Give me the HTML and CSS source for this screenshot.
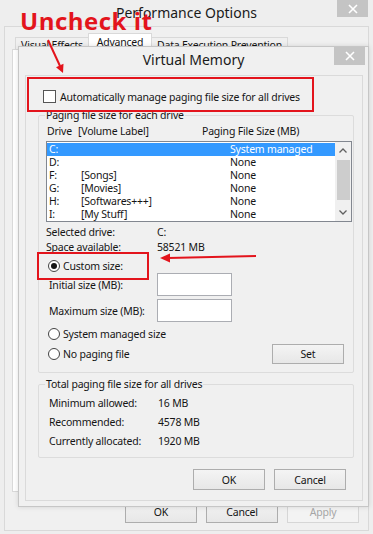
FILE: index.html
```html
<!DOCTYPE html>
<html lang="en">
<head>
  <meta charset="UTF-8">
  <title>Virtual Memory</title>
  <link rel="stylesheet" href="styles.css">
</head>
<body>

  <!-- Performance Options window (behind) -->
  <div class="perf">
    <div class="win-title">
      <span class="win-caption">Performance Options</span>
      <span class="close-btn perf-close">
        <svg width="10" height="10" viewBox="0 0 10 10"><path d="M1 1L9 9M9 1L1 9" stroke="#fff" stroke-width="1.6"/></svg>
      </span>
    </div>
    <div class="perf-client">
      <div class="tabs">
        <span class="tab tab-visual">Visual Effects</span>
        <span class="tab tab-adv active">Advanced</span>
        <span class="tab tab-dep">Data Execution Prevention</span>
      </div>
      <div class="tab-page"></div>
      <div class="btn-row perf-btns">
        <button class="btn">OK</button>
        <button class="btn">Cancel</button>
        <button class="btn" disabled>Apply</button>
      </div>
    </div>
  </div>

  <!-- Virtual Memory dialog -->
  <div class="vm">
    <div class="win-title vm-title">
      <span class="win-caption">Virtual Memory</span>
      <span class="close-btn vm-close">
        <svg width="10" height="10" viewBox="0 0 10 10"><path d="M1 1L9 9M9 1L1 9" stroke="#fff" stroke-width="1.6"/></svg>
      </span>
    </div>
    <div class="vm-client">
      <label class="check-row"><span class="checkbox"></span>Automatically manage paging file size for all drives</label>

      <fieldset class="group group-drives">
        <legend>Paging file size for each drive</legend>
        <div class="list-head"><span>Drive</span><span>[Volume Label]</span><span>Paging File Size (MB)</span></div>
        <div class="listbox">
          <div class="list-rows">
            <div class="list-row selected"><span>C:</span><span></span><span>System managed</span></div>
            <div class="list-row"><span>D:</span><span></span><span>None</span></div>
            <div class="list-row"><span>F:</span><span>[Songs]</span><span>None</span></div>
            <div class="list-row"><span>G:</span><span>[Movies]</span><span>None</span></div>
            <div class="list-row"><span>H:</span><span>[Softwares+++]</span><span>None</span></div>
            <div class="list-row"><span>I:</span><span>[My Stuff]</span><span>None</span></div>
          </div>
          <div class="scrollbar">
            <span class="sb-btn"><svg width="8" height="5" viewBox="0 0 8 5"><path d="M0.5 4.5L4 1L7.5 4.5" fill="none" stroke="#606060" stroke-width="1.3"/></svg></span>
            <span class="sb-thumb"></span>
            <span class="sb-space"></span>
            <span class="sb-btn"><svg width="8" height="5" viewBox="0 0 8 5"><path d="M0.5 0.5L4 4L7.5 0.5" fill="none" stroke="#606060" stroke-width="1.3"/></svg></span>
          </div>
        </div>

        <div class="info-grid">
          <span>Selected drive:</span><span>C:</span>
          <span>Space available:</span><span>58521 MB</span>
        </div>

        <label class="radio-row custom-row"><span class="radio checked"></span>Custom size:</label>
        <div class="size-row"><span class="size-label">Initial size (MB):</span><span class="textbox"></span></div>
        <div class="size-row size-max"><span class="size-label">Maximum size (MB):</span><span class="textbox"></span></div>
        <label class="radio-row system-row"><span class="radio"></span>System managed size</label>
        <div class="set-row">
          <label class="radio-row"><span class="radio"></span>No paging file</label>
          <button class="btn btn-set">Set</button>
        </div>
      </fieldset>

      <fieldset class="group group-total">
        <legend>Total paging file size for all drives</legend>
        <div class="total-grid">
          <span>Minimum allowed:</span><span>16 MB</span>
          <span>Recommended:</span><span>4578 MB</span>
          <span>Currently allocated:</span><span>1920 MB</span>
        </div>
      </fieldset>

      <div class="btn-row vm-btns">
        <button class="btn">OK</button>
        <button class="btn">Cancel</button>
      </div>
    </div>
  </div>

  <!-- red annotations -->
  <div class="note-title">Uncheck it</div>
  <div class="note-box note-auto"></div>
  <div class="note-box note-custom"></div>
  <svg class="note-arrows" width="373" height="534" viewBox="0 0 373 534">
    <line x1="48" y1="40" x2="60" y2="66" stroke="#e3141c" stroke-width="2"/>
    <polygon points="63,73 63.5,63.8 56,67.2" fill="#e3141c"/>
    <line x1="256" y1="256" x2="168" y2="258" stroke="#e3141c" stroke-width="2"/>
    <polygon points="160,258 170,253.5 170,262.5" fill="#e3141c"/>
  </svg>

</body>
</html>
```

FILE: styles.css
```css
body {
  margin: 0;
  width: 373px;
  height: 534px;
  position: relative;
  overflow: hidden;
  background: #eeeeee;
  font-family: "Noto Sans", sans-serif;
  font-size: 10.5px;
  letter-spacing: -0.2px;
  color: #151515;
}

/* shared window bits */
.win-title {
  display: grid;
  grid-template-columns: 1fr auto 1fr;
  align-items: start;
}

.win-caption {
  grid-column: 2;
  font-size: 14px;
  line-height: 26px;
  letter-spacing: 0;
  color: #1a1a1a;
}

.close-btn {
  grid-column: 3;
  justify-self: end;
  display: flex;
  align-items: center;
  justify-content: center;
  width: 31px;
  height: 18px;
  background: #c4c4c4;
}

.btn-row {
  display: flex;
  justify-content: flex-end;
  gap: 9px;
}

.btn {
  width: 72px;
  height: 23px;
  padding: 0;
  border: 1px solid #adadad;
  background: linear-gradient(#f4f4f4, #e7e7e7);
  font: inherit;
  letter-spacing: inherit;
  color: #151515;
}

.btn:disabled {
  color: #a6a6a6;
  border-color: #d6d6d6;
  background: #f3f3f3;
}

/* Performance Options */
.perf {
  height: 534px;
  display: flex;
  flex-direction: column;
}

.perf-close {
  margin-right: 5px;
  height: 17px;
}

.perf-client {
  flex: 1;
  display: flex;
  flex-direction: column;
  margin: 0 4px 3px 4px;
  padding: 6px 8px 7px 7px;
  border: 1px solid #d9d9d9;
  background: #f0f0f0;
}

.tabs {
  display: flex;
  align-items: flex-end;
  height: 16px;
  padding-left: 3px;
}

.tab {
  height: 12px;
  box-sizing: border-box;
  border: 1px solid #d9d9d9;
  border-bottom: none;
  margin-right: -1px;
  text-align: center;
  line-height: 15px;
  white-space: nowrap;
  overflow: hidden;
}

.tab.active {
  height: 16px;
  line-height: 17px;
  background: #fff;
}

.tab-visual { width: 74px; }
.tab-adv { width: 64px; }
.tab-dep { width: 137px; }

.tab-page {
  flex: 1;
  background: #fff;
  border: 1px solid #d9d9d9;
}

.perf-btns {
  margin-top: 8px;
  margin-right: 1px;
}

/* Virtual Memory dialog */
.vm {
  position: absolute;
  left: 18px;
  top: 46px;
  width: 351px;
  height: 461px;
  box-sizing: border-box;
  display: flex;
  flex-direction: column;
  border: 1px solid #c6c6c6;
  background: #f0f0f0;
  box-shadow: 0 0 5px rgba(0,0,0,0.12);
}

.vm-title {
  height: 28px;
}

.vm-close {
  margin-right: 3px;
}

.vm-client {
  flex: 1;
  display: flex;
  flex-direction: column;
  margin: 0 5px 5px 6px;
  padding: 0 8px 0 12px;
  border: 1px solid #dadada;
}

.check-row {
  display: flex;
  align-items: center;
  gap: 4px;
  height: 13px;
  margin-top: 14px;
  padding-left: 5px;
}

.checkbox {
  width: 13px;
  height: 13px;
  box-sizing: border-box;
  border: 1px solid #555;
  background: #fff;
}

.group {
  margin: 0;
  padding: 0;
  min-width: 0;
  border: 1px solid #dcdcdc;
  border-radius: 2px;
}

.group legend {
  margin-left: 6px;
  padding: 0 1px;
  line-height: 14px;
}

.group-drives {
  margin-top: 5px;
  padding-bottom: 8px;
}

.list-head {
  display: grid;
  grid-template-columns: 31px 124px auto;
  margin-top: 2px;
  padding-left: 8px;
  line-height: 14px;
}

.listbox {
  display: flex;
  height: 81px;
  box-sizing: border-box;
  margin: 3px 1px 0 7px;
  border: 1px solid #828790;
  background: #fff;
}

.list-rows {
  flex: 1;
  padding-top: 1px;
}

.list-row {
  display: grid;
  grid-template-columns: 32px 149px auto;
  height: 13px;
  padding-left: 2px;
  line-height: 13px;
}

.list-row.selected {
  background: #3399ff;
  color: #fff;
}

.scrollbar {
  width: 16px;
  display: flex;
  flex-direction: column;
  align-items: center;
  background: #f0f0f0;
}

.sb-btn {
  height: 17px;
  display: flex;
  align-items: center;
}

.sb-thumb {
  width: 13px;
  height: 40px;
  margin-top: 1px;
  background: #cdcdcd;
}

.sb-space {
  flex: 1;
}

.info-grid {
  display: grid;
  grid-template-columns: 111px auto;
  margin-top: 3px;
  padding-left: 7px;
  line-height: 15px;
}

.radio-row {
  display: flex;
  align-items: center;
  gap: 3px;
  height: 14px;
  padding-left: 9px;
}

.radio {
  width: 12px;
  height: 12px;
  box-sizing: border-box;
  border: 1px solid #444;
  border-radius: 50%;
  background: #fff;
  display: flex;
  align-items: center;
  justify-content: center;
}

.radio.checked::after {
  content: "";
  width: 6px;
  height: 6px;
  border-radius: 50%;
  background: #151515;
}

.custom-row {
  margin-top: 4px;
}

.size-row {
  display: flex;
  align-items: center;
  padding-left: 10px;
}

.size-max {
  margin-top: 3px;
}

.size-label {
  width: 108px;
}

.textbox {
  width: 75px;
  height: 23px;
  box-sizing: border-box;
  border: 1px solid #abadb3;
  background: #fff;
}

.system-row {
  margin-top: 5px;
}

.set-row {
  display: flex;
  align-items: center;
  justify-content: space-between;
  margin-top: 3px;
  padding-right: 9px;
}

.btn-set {
  height: 20px;
}

.group-total {
  margin-top: 4px;
  padding: 3px 0 6px 0;
}

.total-grid {
  display: grid;
  grid-template-columns: 109px auto;
  padding-left: 10px;
  line-height: 19px;
}

.vm-btns {
  margin-top: 11px;
  margin-right: 8px;
}

.vm-btns .btn {
  height: 21px;
}

/* annotations */
.note-title {
  position: absolute;
  left: 20px;
  top: 4px;
  font-family: "Open Sans", sans-serif;
  font-weight: 700;
  font-size: 24px;
  line-height: 34px;
  letter-spacing: 0.5px;
  color: #e3141c;
}

.note-box {
  position: absolute;
  box-sizing: border-box;
  border: 2px solid #e3141c;
}

.note-auto {
  left: 27px;
  top: 77px;
  width: 287px;
  height: 35px;
}

.note-custom {
  left: 37px;
  top: 252px;
  width: 112px;
  height: 28px;
}

.note-arrows {
  position: absolute;
  left: 0;
  top: 0;
  pointer-events: none;
}
```
